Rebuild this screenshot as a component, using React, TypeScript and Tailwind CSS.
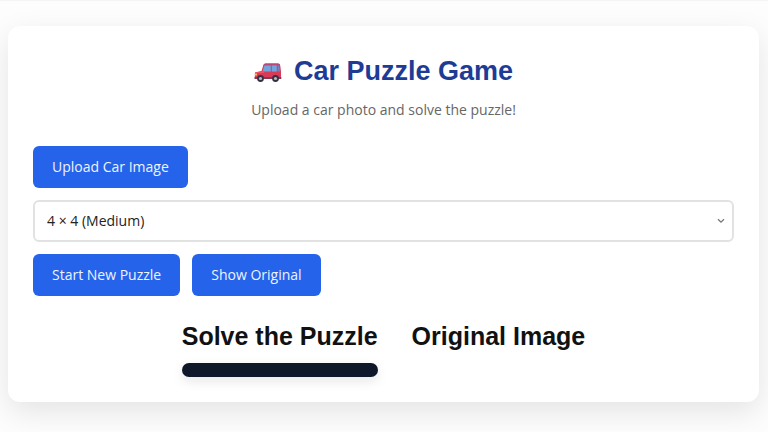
import { useState } from "react";

function CarIcon() {
  return (
    <svg viewBox="0 0 28 20" className="mt-1 h-5 w-7" aria-hidden="true">
      <path d="M1 9.5 L7.5 8 L9.3 2.2 Q9.8 .6 11.5 .6 H24 Q26 .6 26.3 3 L27 8.5 V14.5 Q27 16 25.5 16 H2.5 Q.8 16 .8 14 Z" fill="#d93a58" />
      <path d="M9.3 2.2 Q9.8 .6 11.5 .6 H24 Q26 .6 26.2 2.2 L26.3 2.6 H9.1 Z" fill="#b9487a" />
      <path d="M8.6 8.6 L10.4 2.4 H16.8 V8.6 Z" fill="#6fa4dc" />
      <path d="M17.8 2.4 H22.8 V8.6 H17.8 Z" fill="#6fa4dc" />
      <path d="M23.6 2.4 H25.2 L26 8.6 H23.6 Z" fill="#7280bd" />
      <path d="M1 9.5 L7.5 8.2 H11 L9.5 10 H1 Z" fill="#ee5068" />
      <path d="M.8 10.5 H3 V12.5 H.8 Z" fill="#f7b955" />
      <path d="M.5 14 H27.3 V16 H.5 Z" fill="#8a3553" />
      <circle cx="6.5" cy="15.5" r="3.4" fill="#35303f" />
      <circle cx="6.5" cy="15.5" r="1.6" fill="#b9b3c4" />
      <circle cx="21.5" cy="15.5" r="3.4" fill="#35303f" />
      <circle cx="21.5" cy="15.5" r="1.6" fill="#b9b3c4" />
    </svg>
  );
}

const buttonClass =
  "h-[42px] rounded-md bg-[#2563eb] px-[19px] text-sm text-[#eef4ff] hover:bg-[#1d4ed8]";

export default function App() {
  const [size, setSize] = useState("4");
  return (
    <div className="min-h-screen border-t border-[#f5f5f5] bg-[#fdfdfd] px-2 pt-[25px] pb-[30px] font-['Open_Sans','Noto_Sans',sans-serif] text-[#111111]">
      <main className="mr-px rounded-xl bg-white p-[25px] shadow-[0_10px_30px_rgba(0,0,0,0.1)]">
        <header className="text-center">
          <h1 className="flex items-center justify-center gap-3 font-['Liberation_Sans',Arial,sans-serif] text-[27px] leading-10 font-bold text-[#1e3c96]">
            <CarIcon />
            Car Puzzle Game
          </h1>
          <p className="mt-[7px] text-sm leading-6 text-[#666666]">
            Upload a car photo and solve the puzzle!
          </p>
        </header>

        <div className="mt-6 flex flex-wrap gap-3">
          <button type="button" className={buttonClass}>
            Upload Car Image
          </button>
          <div className="relative w-full">
            <select
              aria-label="Puzzle size"
              value={size}
              onChange={(event) => setSize(event.target.value)}
              className="block h-[42px] w-full appearance-none rounded-md border-2 border-[#e2e2e2] bg-white px-3 text-sm text-[#222222]"
            >
              <option value="3">3 × 3 (Easy)</option>
              <option value="4">4 × 4 (Medium)</option>
              <option value="5">5 × 5 (Hard)</option>
            </select>
            <svg
              viewBox="0 0 8 6"
              className="pointer-events-none absolute top-[18px] right-[9px] h-1.5 w-2"
              fill="none"
              stroke="#777777"
              strokeWidth="1.3"
              aria-hidden="true"
            >
              <path d="M1 1.2 L4 4.2 L7 1.2" />
            </svg>
          </div>
          <button type="button" className={buttonClass}>
            Start New Puzzle
          </button>
          <button type="button" className={buttonClass}>
            Show Original
          </button>
        </div>

        <div className="mt-5 flex flex-wrap justify-center gap-[34px] font-['Liberation_Sans',Arial,sans-serif]">
          <section>
            <h2 className="text-[25px] leading-10 font-bold">Solve the Puzzle</h2>
            <div className="mt-[7px] h-3.5 rounded-full bg-[#0f172a] shadow-[0_4px_12px_rgba(15,23,42,0.1)]" />
          </section>
          <section>
            <h2 className="text-[25px] leading-10 font-bold">Original Image</h2>
          </section>
        </div>
      </main>
    </div>
  );
}
